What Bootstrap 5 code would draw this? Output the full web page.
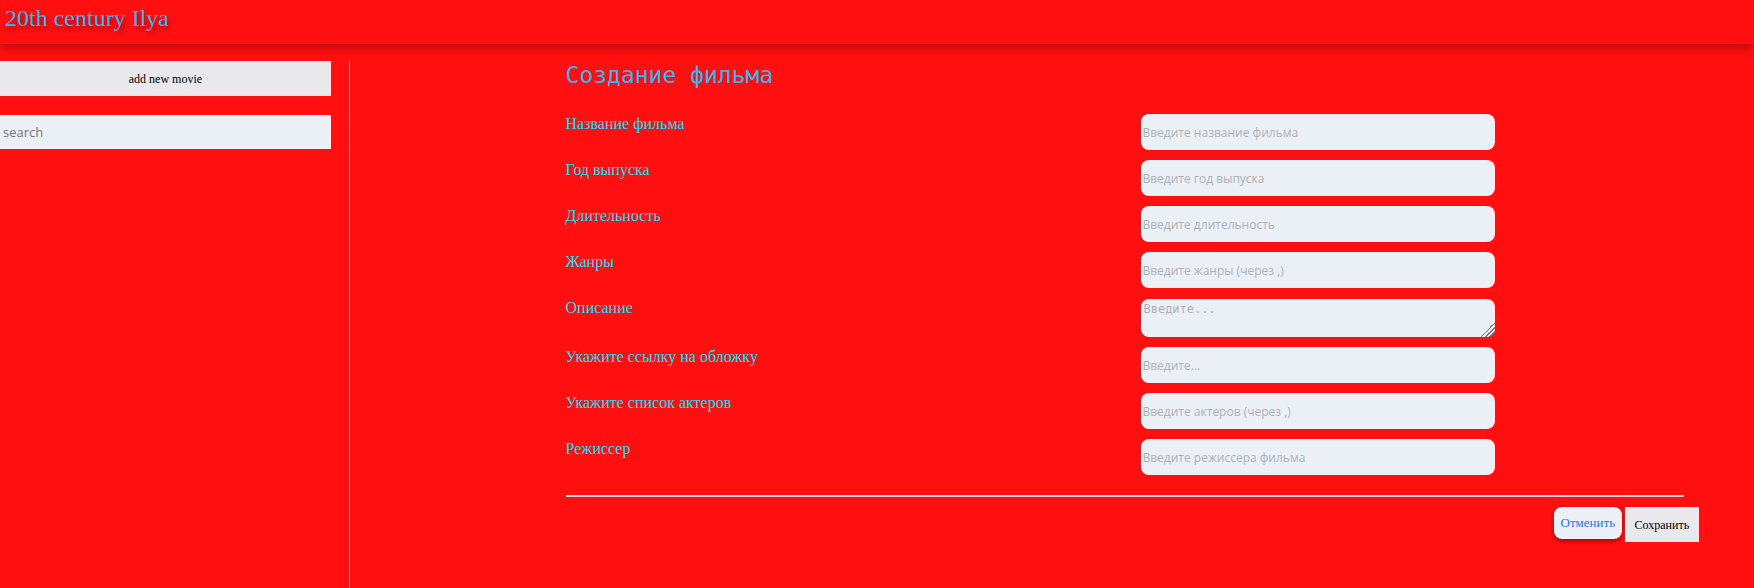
<!DOCTYPE html>
<html lang="ru">
<head>
<meta charset="utf-8">
<meta name="viewport" content="width=device-width, initial-scale=1">
<title>20th century Ilya</title>
<link href="https://cdn.jsdelivr.net/npm/bootstrap@5.3.0/dist/css/bootstrap.min.css" rel="stylesheet">
<style>
body { background: #ff0f0f; font-family: "Liberation Serif", serif; font-size: 16px; line-height: 20px; color: #00e5ff; }
.site-header { height: 44px; padding: 4px 5px; box-shadow: 0 2px 10px rgba(0,0,0,.35); }
.brand { font-size: 24px; line-height: 28px; color: #33b5f5; text-shadow: 2px 4px 4px rgba(0,0,0,.3); }
.brand:hover { color: #33b5f5; }
.page-body { padding-top: 17px; }
.sidebar { width: calc(20% - 1px); padding-right: 18px; border-right: 1px solid rgba(255,255,255,.45); }
.plain-btn { height: 35px; padding: 0; border: 0; background: #e9e9ed; color: #000; font-size: 12px; }
.search-box { height: 34px; margin-top: 19px; padding: 0 3px; border: 0; background: #ebf0f7; font: 13px "Open Sans", sans-serif; }
.search-box::placeholder { color: #757575; opacity: 1; }
.content { padding-left: 12.3%; padding-right: 4%; }
.form-title { font: 500 23px/28px "DejaVu Sans Mono", monospace; color: #33b5f5; margin-bottom: 25px; }
.field-grid { display: grid; grid-template-columns: 51.5% 31.6%; row-gap: 10px; }
.field { width: 100%; height: 36px; padding: 0 1px; border: 0; border-radius: 8px; background: #ebf0f7; font: 12px "Open Sans", sans-serif; }
textarea.field { height: 38px; padding: 3px 2px; margin-top: 1px; font: 12px/14px "DejaVu Sans Mono", monospace; display: block; }
textarea.field::-webkit-resizer { background: linear-gradient(135deg, transparent 50%, #777 50%, #777 56%, transparent 56%, transparent 64%, #777 64%, #777 70%, transparent 70%, transparent 78%, #777 78%, #777 84%, transparent 84%); }
.field::placeholder { color: #aeb1b5; opacity: 1; }
.divider { border: 0; border-top: 2px solid #d8d8d8; opacity: 1; margin: 20px 0 10px; }
.actions { gap: 3px; margin-right: -15px; }
.cancel-btn { height: 32px; width: 68px; padding: 0; border: 0; border-radius: 8px; background: #ebf0f7; color: #2f6df6; font-size: 13px; box-shadow: 0 2px 4px rgba(0,0,0,.4); }
.save-btn { width: 74px; }
</style>
</head>
<body class="d-flex flex-column min-vh-100">
<header class="site-header"><a href="#" class="brand text-decoration-none d-inline-block">20th century Ilya</a></header>
<div class="page-body d-flex flex-grow-1">
  <aside class="sidebar flex-shrink-0">
    <button type="button" class="plain-btn d-block w-100">add new movie</button>
    <input type="search" class="search-box d-block w-100" placeholder="search" aria-label="search">
  </aside>
  <main class="content flex-grow-1">
    <form>
      <h1 class="form-title">Создание фильма</h1>
      <div class="field-grid">
        <label for="f-name">Название фильма</label><input id="f-name" class="field" placeholder="Введите название фильма">
        <label for="f-year">Год выпуска</label><input id="f-year" class="field" placeholder="Введите год выпуска">
        <label for="f-length">Длительность</label><input id="f-length" class="field" placeholder="Введите длительность">
        <label for="f-genres">Жанры</label><input id="f-genres" class="field" placeholder="Введите жанры (через ,)">
        <label for="f-about">Описание</label><textarea id="f-about" class="field" placeholder="Введите..."></textarea>
        <label for="f-cover">Укажите ссылку на обложку</label><input id="f-cover" class="field" placeholder="Введите...">
        <label for="f-actors">Укажите список актеров</label><input id="f-actors" class="field" placeholder="Введите актеров (через ,)">
        <label for="f-director">Режиссер</label><input id="f-director" class="field" placeholder="Введите режиссера фильма">
      </div>
      <hr class="divider">
      <div class="actions d-flex justify-content-end align-items-start">
        <button type="button" class="cancel-btn">Отменить</button>
        <button type="submit" class="plain-btn save-btn">Сохранить</button>
      </div>
    </form>
  </main>
</div>
<script src="https://cdn.jsdelivr.net/npm/bootstrap@5.3.0/dist/js/bootstrap.bundle.min.js"></script>
</body>
</html>
